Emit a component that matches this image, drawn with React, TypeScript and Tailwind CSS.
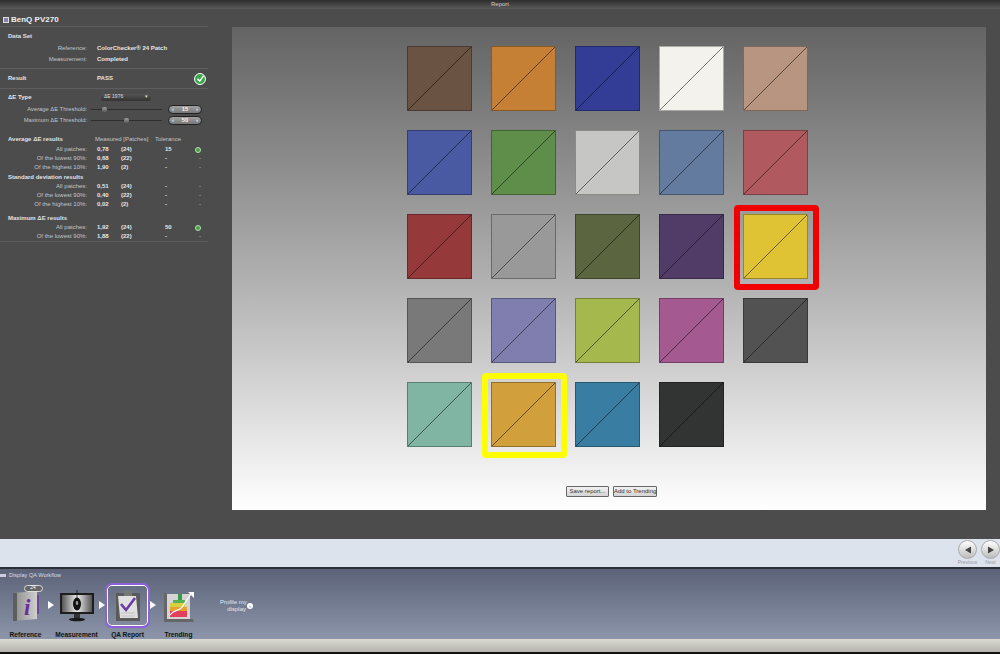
const font = { fontFamily: '"Liberation Sans", Arial, sans-serif' };

const swatches = [
  "#6b5344", "#c58035", "#333d95", "#f3f2ec", "#b89580",
  "#4a5aa2", "#5f8e4b", "#c6c6c4", "#647ba0", "#b05a60",
  "#96393a", "#999999", "#5b6540", "#513c67", "#e0c235",
  "#797979", "#7f7eae", "#a5b84e", "#a45a90", "#515251",
  "#7fb5a2", "#d19f3c", "#3a7da2", "#323433",
];

function Swatch({ color, ring }: { color: string; ring?: "red" | "yellow" }) {
  return (
    <div className="relative h-[65px] w-[65px] border border-black/30" style={{ backgroundColor: color }}>
      <svg viewBox="0 0 63 63" className="h-full w-full">
        <line x1="0" y1="63" x2="63" y2="0" stroke="#000" strokeOpacity="0.65" strokeWidth="0.8" />
      </svg>
      {ring === "red" ? <div className="absolute -bottom-[12px] -left-[10px] -right-[12px] -top-[10px] rounded-[4px] border-[6px] border-[#f00000]" /> : null}
      {ring === "yellow" ? <div className="absolute -bottom-[12px] -left-[10px] -right-[12px] -top-[10px] rounded-[4px] border-[6px] border-[#ffff00]" /> : null}
    </div>
  );
}

function Row({ label, value, patches, tol, ok }: { label: string; value: string; patches: string; tol: string; ok?: boolean }) {
  return (
    <div className="grid h-[9px] grid-cols-[87px_24px_36px_28px_1fr] items-center text-[6px]">
      <span className="whitespace-nowrap text-right text-[#c4c4c4]">{label}</span>
      <span className="pl-[10px] font-bold text-[#e6e6e6]">{value}</span>
      <span className="pl-[10px] font-bold text-[#e6e6e6]">{patches}</span>
      <span className="pl-[18px] font-bold text-[#e6e6e6]">{tol}</span>
      <span className="flex justify-end pr-[7px] text-[#c4c4c4]">
        {ok ? <span className="h-[6px] w-[6px] rounded-full border border-[#b9e3b0] bg-[#48a048]" /> : "-"}
      </span>
    </div>
  );
}

function Heading({ children, className = "" }: { children: React.ReactNode; className?: string }) {
  return <div className={`pl-[8px] text-[6px] font-bold text-[#e2e2e2] ${className}`}>{children}</div>;
}

function Slider({ label, pos, value }: { label: string; pos: string; value: string }) {
  return (
    <div className="flex h-[11px] items-center text-[5.8px]">
      <span className="w-[87px] shrink-0 whitespace-nowrap text-right text-[#c4c4c4]">{label}</span>
      <div className="relative ml-[4px] h-[1px] w-[71px] bg-[#2e2e2e]">
        <span className={`absolute -top-[2px] h-[5px] w-[5px] rounded-[2px] bg-gradient-to-b from-[#a0a0a0] to-[#5a5a5a] ${pos}`} />
      </div>
      <div className="ml-[6px] flex h-[9px] w-[34px] items-center justify-between rounded-full border border-[#222] bg-gradient-to-b from-[#a2a2a2] to-[#777] px-[3px] font-bold text-[#f2f2f2]">
        <span>‹</span>
        <span>{value}</span>
        <span>›</span>
      </div>
    </div>
  );
}

function Sidebar() {
  return (
    <aside className="w-[232px] shrink-0 pt-[4px]">
      <div className="mr-[24px] flex h-[14px] items-center gap-[2px] border-b border-[#5e5e5e] pl-[3px] text-[8px] font-bold text-[#efefef]">
        <span className="h-[6px] w-[6px] border border-[#ddd] bg-[#8a7fa8]" />
        BenQ PV270
      </div>
      <div className="mr-[24px] border-b border-[#5e5e5e] pb-[3px] pt-[5px]">
        <Heading className="h-[11px]">Data Set</Heading>
        <div className="flex h-[11px] items-center text-[6px]">
          <span className="w-[87px] text-right text-[#c4c4c4]">Reference:</span>
          <span className="pl-[10px] font-bold text-[#e6e6e6]">ColorChecker® 24 Patch</span>
        </div>
        <div className="flex h-[11px] items-center text-[6px]">
          <span className="w-[87px] text-right text-[#c4c4c4]">Measurement:</span>
          <span className="pl-[10px] font-bold text-[#e6e6e6]">Completed</span>
        </div>
      </div>
      <div className="mr-[24px] flex h-[20px] items-center border-b border-[#5e5e5e] pl-[8px] text-[6px] font-bold text-[#e6e6e6]">
        <span className="w-[89px]">Result</span>
        <span className="flex-1">PASS</span>
        <span className="mr-[2px] flex h-[12px] w-[12px] items-center justify-center rounded-full border border-white bg-[#3aa648]">
          <svg viewBox="0 0 12 12" className="h-[9px] w-[9px]">
            <path d="M2 6.5 5 9.5 10 2.5" fill="none" stroke="#fff" strokeWidth="2" />
          </svg>
        </span>
      </div>
      <div className="mr-[24px] pb-[4px] pt-[2px]">
        <div className="mb-[1px] flex h-[12px] items-center pl-[8px] text-[6px] font-bold text-[#e6e6e6]">
          <span className="w-[93px]">ΔE Type</span>
          <span className="flex h-[7px] w-[50px] items-center justify-between rounded-[2px] bg-gradient-to-b from-[#555] to-[#333] px-[3px] text-[5px] font-normal text-[#ddd]">
            ΔE 1976 <span>▾</span>
          </span>
        </div>
        <Slider label="Average  ΔE Threshold:" pos="left-[11px]" value="15" />
        <Slider label="Maximum ΔE Threshold:" pos="left-[33px]" value="50" />
      </div>
      <div className="mr-[24px] border-b border-[#5e5e5e] pt-[5px]">
        <div className="mb-[1px] grid h-[9px] grid-cols-[87px_60px_30px] items-center pl-[8px] text-[6px] text-[#c4c4c4]">
          <span className="whitespace-nowrap font-bold text-[#e2e2e2]">Average ΔE results</span>
          <span className="whitespace-nowrap">Measured [Patches]</span>
          <span>Tolerance</span>
        </div>
        <Row label="All patches:" value="0,78" patches="(24)" tol="15" ok />
        <Row label="Of the lowest 90%:" value="0,68" patches="(22)" tol="-" />
        <Row label="Of the highest 10%:" value="1,90" patches="(2)" tol="-" />
        <Heading className="flex h-[10px] items-center">Standard deviation results</Heading>
        <Row label="All patches:" value="0,51" patches="(24)" tol="-" />
        <Row label="Of the lowest 90%:" value="0,40" patches="(22)" tol="-" />
        <Row label="Of the highest 10%:" value="0,02" patches="(2)" tol="-" />
        <Heading className="mt-[4px] flex h-[10px] items-center">Maximum ΔE results</Heading>
        <Row label="All patches:" value="1,92" patches="(24)" tol="50" ok />
        <Row label="Of the lowest 90%:" value="1,88" patches="(22)" tol="-" />
      </div>
    </aside>
  );
}

function Report() {
  return (
    <main className="mb-[29px] mr-[14px] mt-[18px] flex flex-1 flex-col items-center bg-gradient-to-b from-[#646464] via-[#adadad] to-white pt-[19px]">
      <div className="ml-[-3px] grid grid-cols-[repeat(5,65px)] gap-[19px]">
        {swatches.map((c, i) => (
          <Swatch key={i} color={c} ring={i === 14 ? "red" : i === 21 ? "yellow" : undefined} />
        ))}
      </div>
      <div className="mb-[13px] ml-[5px] mt-auto flex gap-[4px] text-[6px] text-[#333]">
        <button className="h-[11px] w-[43px] whitespace-nowrap rounded-[1px] border border-[#666] bg-gradient-to-b from-[#f2f2f2] to-[#d4d4d4]">Save report...</button>
        <button className="h-[11px] w-[44px] whitespace-nowrap rounded-[1px] border border-[#666] bg-gradient-to-b from-[#f2f2f2] to-[#d4d4d4]">Add to Trending</button>
      </div>
    </main>
  );
}

function NavButton({ label, dir }: { label: string; dir: "left" | "right" }) {
  return (
    <div className="flex w-[23px] flex-col items-center">
      <div className="flex h-[19px] w-[19px] items-center justify-center rounded-full border border-[#aaa] bg-gradient-to-b from-white to-[#bdbdbd]">
        <svg viewBox="0 0 10 10" className="h-[10px] w-[10px]">
          <path d={dir === "left" ? "M8 1.5V8.5L2 5Z" : "M2 1.5V8.5L8 5Z"} fill="#444" />
        </svg>
      </div>
      <span className="text-[5px] leading-[6px] text-[#999]">{label}</span>
    </div>
  );
}

function ReferenceIcon() {
  return (
    <svg viewBox="0 0 28 32" className="h-[32px] w-[28px]">
      <defs>
        <linearGradient id="book" x1="0" x2="1" y1="0" y2="0">
          <stop offset="0" stopColor="#8a8a8a" />
          <stop offset="1" stopColor="#cfcfcf" />
        </linearGradient>
      </defs>
      <path d="M1 3 25 1V29L1 31Z" fill="url(#book)" />
      <path d="M1 3H5V31H1Z" fill="#5e5e5e" />
      <path d="M25 5H27V24H25Z" fill="#6a4a96" />
      <text x="12" y="25" fontFamily="Liberation Serif, serif" fontStyle="italic" fontWeight="700" fontSize="23" fill="#6a2ca0">i</text>
    </svg>
  );
}

function MonitorIcon() {
  return (
    <svg viewBox="0 0 36 32" className="h-[32px] w-[36px]">
      <defs>
        <linearGradient id="screen" x1="0" x2="1" y1="0" y2="0">
          <stop offset="0" stopColor="#555" />
          <stop offset="0.5" stopColor="#eee" />
          <stop offset="1" stopColor="#555" />
        </linearGradient>
      </defs>
      <path d="M1 3H35V24H1Z" fill="#1d1d1d" />
      <path d="M3 5H33V22H3Z" fill="url(#screen)" />
      <ellipse cx="18" cy="14" rx="4" ry="6.5" fill="#111" />
      <path d="M18 0V9" stroke="#111" strokeWidth="0.8" />
      <ellipse cx="18" cy="13" rx="1.3" ry="2" fill="#999" />
      <path d="M15 24H21V28H15Z" fill="#333" />
      <ellipse cx="18" cy="29.5" rx="8" ry="1.8" fill="#1a1a1a" />
    </svg>
  );
}

function ReportIcon() {
  return (
    <svg viewBox="0 0 28 34" className="h-[34px] w-[28px]">
      <path d="M2 4H26V32H2Z" fill="#5a5a5a" />
      <path d="M4 7H22L24 29H6Z" fill="#e0e0e0" />
      <path d="M10 2H18V7H10Z" fill="#777" />
      <path d="M7 15 12 21 21 9" fill="none" stroke="#6a3aa8" strokeWidth="2.6" />
      <path d="M7 24H21M7 27H21" stroke="#bbb" strokeWidth="0.8" />
    </svg>
  );
}

function TrendIcon() {
  return (
    <svg viewBox="0 0 32 34" className="h-[34px] w-[32px]">
      <path d="M1 3 4 5V30H30L31 33H1Z" fill="#666" />
      <path d="M4 5H27V30H4Z" fill="#d4d4d4" />
      <path d="M7 22H24V28H7Z" fill="#e0405a" />
      <path d="M7 18H24V22H7Z" fill="#e8a030" />
      <path d="M7 14H22V18H7Z" fill="#d8d040" />
      <path d="M10 11H22V14H10Z" fill="#58b050" />
      <path d="M15 5H19V11H15Z" fill="#3a9a4a" />
      <path d="M7 26C12 19 17 24 21 15L28 5" fill="none" stroke="#fff" strokeWidth="1.2" />
      <path d="M25 3H31V9Z" fill="#fff" />
    </svg>
  );
}

function Arrow() {
  return <span className="mt-[18px] h-0 w-0 shrink-0 border-y-[4px] border-l-[6px] border-y-transparent border-l-white" />;
}

function Step({ label, children, active }: { label: string; children: React.ReactNode; active?: boolean }) {
  return (
    <div className="flex w-[45px] shrink-0 flex-col items-center">
      <div className={`flex h-[45px] w-[45px] shrink-0 items-center justify-center rounded-[7px] ${active ? "border-2 border-[#8f5fd8] shadow-[0_0_0_1px_#fff_inset]" : ""}`}>
        {children}
      </div>
      <span className="mt-[3px] whitespace-nowrap text-[6.6px] font-bold leading-[8px] text-[#111]">{label}</span>
    </div>
  );
}

export default function App() {
  return (
    <div className="flex h-[654px] w-[1000px] flex-col overflow-hidden bg-[#4c4c4c]" style={font}>
      <header className="flex h-[9px] shrink-0 items-center justify-center bg-gradient-to-b from-[#2e2e2e] to-[#5a5a5a] text-[6px] text-[#cfcfcf]">
        Report
      </header>
      <div className="flex min-h-0 flex-1">
        <Sidebar />
        <Report />
      </div>
      <div className="flex h-[28px] shrink-0 justify-end overflow-hidden bg-[#dde3ec] pt-[1px]">
        <div className="-mr-[2px] flex items-start">
          <NavButton label="Previous" dir="left" />
          <NavButton label="Next" dir="right" />
        </div>
      </div>
      <section className="h-[72px] shrink-0 border-t-2 border-[#2c2f36] bg-gradient-to-b from-[#5c6378] to-[#8c95a9]">
        <div className="flex h-[10px] items-center gap-[3px] pt-[2px] text-[5.6px] text-[#d8dce4]">
          <span className="h-[3px] w-[6px] bg-[#ccd]" />
          Display QA Workflow
        </div>
        <div className="flex items-start pl-[3px] pt-[4px]">
          <Step label="Reference">
            <div className="relative">
              <ReferenceIcon />
              <span className="absolute -top-[5px] left-[12px] flex h-[7px] w-[19px] items-center justify-center rounded-full border border-[#ddd] bg-[#666] text-[5px] text-white">24</span>
            </div>
          </Step>
          <Arrow />
          <Step label="Measurement"><MonitorIcon /></Step>
          <Arrow />
          <Step label="QA Report" active><ReportIcon /></Step>
          <Arrow />
          <Step label="Trending"><TrendIcon /></Step>
          <div className="ml-[19px] mt-[16px] flex shrink-0 items-center gap-[1px] text-[6px] leading-[7px] text-[#e4e7ee]">
            <span className="w-[26px] whitespace-nowrap text-right">Profile my<br />display</span>
            <span className="flex h-[6px] w-[6px] items-center justify-center rounded-full bg-white text-[5px] text-[#555]">›</span>
          </div>
        </div>
      </section>
      <footer className="h-[13px] shrink-0 bg-gradient-to-b from-[#dad9d2] to-[#b5b4ad]" />
      <div className="h-[2px] shrink-0 bg-[#111]" />
    </div>
  );
}
